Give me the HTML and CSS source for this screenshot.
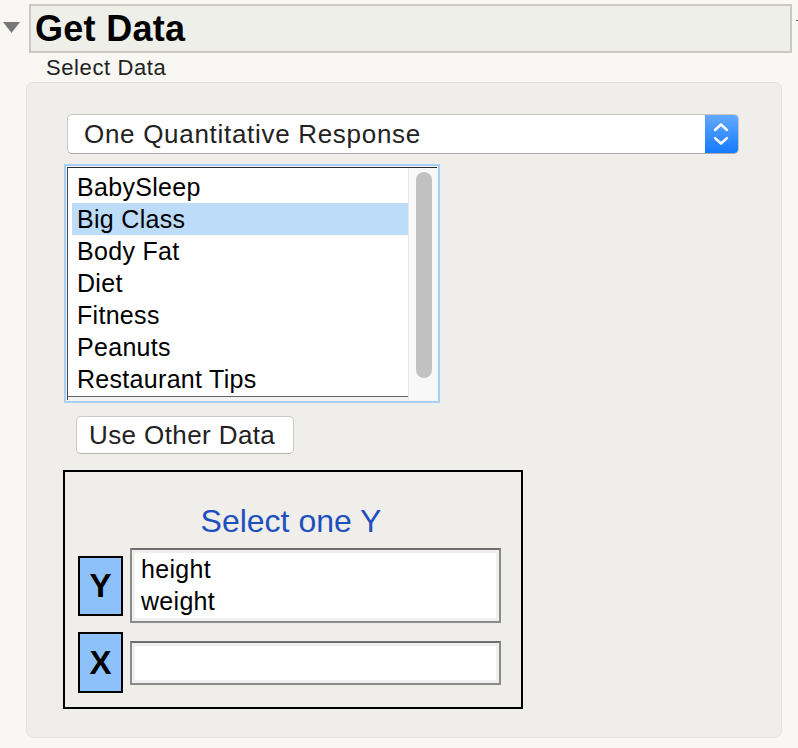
FILE: index.html
```html
<!DOCTYPE html>
<html>
<head>
<meta charset="utf-8">
<link rel="stylesheet" href="styles.css">
</head>
<body>
<div class="header-row">
  <div class="toggle">
    <svg width="17" height="13" viewBox="0 0 17 13"><polygon points="0,1 17,1 8.5,12" fill="#787878"/></svg>
  </div>
  <div class="title-box">Get Data</div>
  <span class="edge-mark"></span>
</div>
<div class="section-label">Select Data</div>
<div class="panel">
  <div class="dropdown">
    <span class="dropdown-text">One Quantitative Response</span>
    <span class="stepper">
      <svg width="33" height="38" viewBox="0 0 33 38">
        <polyline points="10,15 16,9.5 22,15" fill="none" stroke="#fff" stroke-width="2.4" stroke-linecap="round" stroke-linejoin="round"/>
        <polyline points="10,23 16,28.5 22,23" fill="none" stroke="#fff" stroke-width="2.4" stroke-linecap="round" stroke-linejoin="round"/>
      </svg>
    </span>
  </div>
  <div class="listbox">
    <div class="list-frame">
      <div class="list-items">
        <div class="item">BabySleep</div>
        <div class="item selected">Big Class</div>
        <div class="item">Body Fat</div>
        <div class="item">Diet</div>
        <div class="item">Fitness</div>
        <div class="item">Peanuts</div>
        <div class="item">Restaurant Tips</div>
      </div>
      <div class="scrollbar"><div class="thumb"></div></div>
    </div>
  </div>
  <div class="button">Use Other Data</div>
  <div class="select-box">
    <div class="select-title">Select one Y</div>
    <div class="role-row">
      <div class="role-label role-y">Y</div>
      <div class="role-list role-list-y">
        <div class="role-item">height</div>
        <div class="role-item">weight</div>
      </div>
    </div>
    <div class="role-row">
      <div class="role-label role-x">X</div>
      <div class="role-list role-list-x"></div>
    </div>
  </div>
</div>
</body>
</html>
```
FILE: styles.css
```css
html, body {
  margin: 0;
  padding: 0;
  background: #f8f7f3;
}
body {
  width: 798px;
  height: 748px;
  overflow: hidden;
  font-family: "Liberation Sans", Arial, Helvetica, sans-serif;
  color: #1a1a1a;
}
.header-row {
  display: flex;
  align-items: flex-start;
  padding-top: 4px;
}
.toggle {
  width: 29px;
  flex: none;
  padding-top: 17px;
  padding-left: 3px;
  box-sizing: border-box;
}
.toggle svg { display: block; }
.title-box {
  width: 763px;
  height: 49px;
  box-sizing: border-box;
  border: 2px solid #c9c8c2;
  background: #efefea;
  font-weight: bold;
  font-size: 36px;
  letter-spacing: 0.3px;
  line-height: 45px;
  padding-left: 4px;
  color: #000;
  flex: none;
}
.edge-mark {
  width: 2px;
  height: 1px;
  margin-left: 4px;
  margin-top: 16px;
  background: #666;
  flex: none;
}
.section-label {
  margin-top: 3px;
  margin-left: 46px;
  font-size: 22px;
  letter-spacing: 0.6px;
  line-height: 24px;
  color: #222;
}
.panel {
  margin-top: 2px;
  margin-left: 26px;
  width: 756px;
  height: 656px;
  box-sizing: border-box;
  background: #efeeea;
  border: 1px solid #e3e2dd;
  border-radius: 7px;
  display: flex;
  flex-direction: column;
  align-items: flex-start;
}
.dropdown {
  margin-top: 31px;
  margin-left: 40px;
  width: 672px;
  height: 40px;
  box-sizing: border-box;
  background: #fff;
  border: 1px solid #c6c6c6;
  border-bottom-color: #ababab;
  border-radius: 5px;
  display: flex;
  align-items: stretch;
  overflow: hidden;
}
.dropdown-text {
  flex: 1;
  padding-left: 16px;
  font-size: 26px;
  letter-spacing: 0.7px;
  line-height: 38px;
  color: #222;
}
.stepper {
  width: 33px;
  flex: none;
  background: linear-gradient(#63a9ff, #157aff);
  display: flex;
}
.stepper svg { display: block; }
.listbox {
  margin-top: 10px;
  margin-left: 37px;
  width: 376px;
  height: 239px;
  box-sizing: border-box;
  border: 2px solid #a7cff6;
  background: #f3f3f3;
  padding: 1px;
}
.list-frame {
  height: 100%;
  display: flex;
  border-top: 1px solid #2c2c2c;
  border-left: 1px solid #4a4a4a;
  box-sizing: border-box;
}
.list-items {
  flex: 1;
  background: #fff;
  padding: 3px 0 0 4px;
  border-bottom: 1px solid #666;
  margin-bottom: 3px;
  box-sizing: border-box;
}
.item {
  height: 32px;
  line-height: 32px;
  padding-left: 5px;
  font-size: 25px;
  letter-spacing: 0.3px;
  color: #000;
}
.item.selected { background: #bcdcfa; }
.scrollbar {
  width: 29px;
  flex: none;
  background: #f8f8f8;
  border-left: 1px solid #e6e6e6;
  box-sizing: border-box;
  padding-top: 4px;
  padding-left: 7px;
}
.thumb {
  width: 16px;
  height: 206px;
  border-radius: 8px;
  background: #c1c1c1;
}
.button {
  margin-top: 13px;
  margin-left: 49px;
  width: 218px;
  height: 38px;
  box-sizing: border-box;
  background: #fff;
  border: 1px solid #c9c9c9;
  border-bottom-color: #b4b4b4;
  border-radius: 5px;
  padding-left: 12px;
  font-size: 26px;
  letter-spacing: 0.4px;
  line-height: 36px;
  color: #222;
}
.select-box {
  margin-top: 16px;
  margin-left: 36px;
  width: 460px;
  height: 239px;
  box-sizing: border-box;
  border: 2px solid #000;
  padding: 30px 0 0 13px;
}
.select-title {
  font-size: 32px;
  line-height: 38px;
  color: #1f4fbf;
  text-align: center;
  margin-left: -17px;
  margin-bottom: 8px;
}
.role-row {
  display: flex;
  align-items: center;
  margin-bottom: 9px;
}
.role-label {
  width: 45px;
  box-sizing: border-box;
  border: 2px solid #000;
  background: #8cc1fa;
  font-weight: bold;
  font-size: 33px;
  color: #000;
  text-align: center;
  flex: none;
}
.role-y { height: 60px; line-height: 56px; }
.role-x { height: 61px; line-height: 57px; }
.role-list {
  margin-left: 7px;
  width: 371px;
  box-sizing: border-box;
  border: 2px solid #8a8a8a;
  border-top-color: #6e6e6e;
  background: #fff;
  box-shadow: inset 0 0 0 3px #efefef;
  padding: 3px 0 0 9px;
  flex: none;
}
.role-list-y { height: 75px; }
.role-list-x { height: 44px; }
.role-item {
  font-size: 25px;
  letter-spacing: 0.3px;
  line-height: 32px;
  color: #000;
}
```
